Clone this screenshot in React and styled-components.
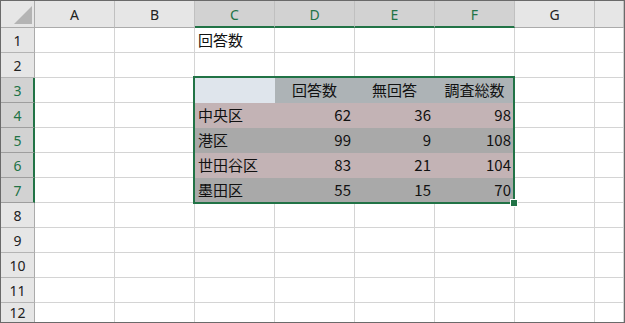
import React from "react";
import styled, { createGlobalStyle, css } from "styled-components";

const Global = createGlobalStyle`
  html, body { margin: 0; padding: 0; background: #ffffff; }
  * { box-sizing: border-box; }
`;

const GREEN = "#217346";

const Sheet = styled.div`
  width: 625px;
  height: 323px;
  border: 1px solid #6a6a6a;
  display: grid;
  grid-template-columns: 34px repeat(7, 80px) 1fr;
  grid-template-rows: 27px repeat(11, 25px) 1fr;
  background: #ffffff;
  overflow: hidden;
  font-family: "Noto Sans CJK JP", "Noto Sans", sans-serif;
`;

const placed = css`
  grid-row: ${(p) => p.$row};
  grid-column: ${(p) => p.$col};
`;

const Corner = styled.div`
  grid-row: 1;
  grid-column: 1;
  background: #e6e6e6;
  border-right: 1px solid #ababab;
  border-bottom: 1px solid #ababab;
  display: flex;
  align-items: flex-end;
  justify-content: flex-end;
  padding: 0 2px 3px 0;
`;

const ColHead = styled.div`
  ${placed};
  background: ${(p) => (p.$sel ? "#d2d2d2" : "#e6e6e6")};
  color: ${(p) => (p.$sel ? GREEN : "#222222")};
  border-right: 1px solid #c0c0c0;
  border-bottom: ${(p) => (p.$sel ? `2px solid ${GREEN}` : "1px solid #ababab")};
  display: flex;
  align-items: center;
  justify-content: center;
  font-family: "Noto Sans", "Open Sans", sans-serif;
  font-size: 14px;
  padding-top: ${(p) => (p.$sel ? "1px" : "0")};
`;

const RowHead = styled.div`
  ${placed};
  background: ${(p) => (p.$sel ? "#d2d2d2" : "#e6e6e6")};
  color: ${(p) => (p.$sel ? GREEN : "#222222")};
  border-right: ${(p) => (p.$sel ? `2px solid ${GREEN}` : "1px solid #ababab")};
  border-bottom: 1px solid ${(p) => (p.$sel ? "#9e9e9e" : "#b4b4b4")};
  display: flex;
  align-items: center;
  justify-content: center;
  font-family: "Noto Sans", "Open Sans", sans-serif;
  font-size: 14px;
  padding-left: ${(p) => (p.$sel ? "1px" : "0")};
`;

const justify = { right: "flex-end", center: "center", left: "flex-start" };

const Cell = styled.div`
  ${placed};
  border-right: 1px solid #d4d4d4;
  border-bottom: 1px solid #d4d4d4;
  display: flex;
  align-items: center;
  justify-content: ${(p) => justify[p.$align || "left"]};
  padding: 0 3px 2px 3px;
  font-size: 15px;
  color: #111111;
  white-space: nowrap;
  ${(p) =>
    p.$fill &&
    css`
      background: ${p.$fill};
      border-color: ${p.$fill};
    `}
`;

const Selection = styled.div`
  grid-column: 4 / 8;
  grid-row: 4 / 9;
  margin: -2px 0 -1px -2px;
  border: 2px solid ${GREEN};
  position: relative;
  pointer-events: none;
  z-index: 1;
`;

const Handle = styled.div`
  position: absolute;
  right: -5px;
  bottom: -5px;
  width: 8px;
  height: 8px;
  background: ${GREEN};
  border: 1px solid #ffffff;
`;

const cols = ["A", "B", "C", "D", "E", "F", "G", ""];
const selCols = ["C", "D", "E", "F"];

const C3 = "#dfe5ec";
const HEAD = "#adb3b6";
const PINK = "#c3b3b5";
const GRAY = "#a9a9a9";

const data = {
  1: { C: { t: "回答数" } },
  3: {
    C: { t: "", f: C3 },
    D: { t: "回答数", f: HEAD, a: "center" },
    E: { t: "無回答", f: HEAD, a: "center" },
    F: { t: "調査総数", f: HEAD, a: "center" },
  },
};

const rowsData = [
  ["中央区", 62, 36, 98, PINK],
  ["港区", 99, 9, 108, GRAY],
  ["世田谷区", 83, 21, 104, PINK],
  ["墨田区", 55, 15, 70, GRAY],
];
rowsData.forEach(([name, a, b, c, fill], i) => {
  data[4 + i] = {
    C: { t: name, f: fill },
    D: { t: String(a), f: fill, a: "right" },
    E: { t: String(b), f: fill, a: "right" },
    F: { t: String(c), f: fill, a: "right" },
  };
});

function CornerTriangle() {
  return (
    <svg width="18" height="18" viewBox="0 0 18 18">
      <polygon points="0,18 18,18 18,0" fill="#b4b4b4" />
    </svg>
  );
}

export default function App() {
  const rows = Array.from({ length: 12 }, (_, i) => i + 1);
  return (
    <>
      <Global />
      <Sheet>
        <Corner>
          <CornerTriangle />
        </Corner>
        {cols.map((c, i) => (
          <ColHead key={"h" + i} $row={1} $col={i + 2} $sel={selCols.includes(c)}>
            {c}
          </ColHead>
        ))}
        {rows.map((r) => (
          <React.Fragment key={r}>
            <RowHead $row={r + 1} $col={1} $sel={r >= 3 && r <= 7}>
              {r}
            </RowHead>
            {cols.map((c, i) => {
              const d = (data[r] && data[r][c]) || null;
              return (
                <Cell
                  key={r + "-" + i}
                  $row={r + 1}
                  $col={i + 2}
                  $fill={d && d.f}
                  $align={d && d.a}
                >
                  {d ? d.t : ""}
                </Cell>
              );
            })}
          </React.Fragment>
        ))}
        <Selection>
          <Handle />
        </Selection>
      </Sheet>
    </>
  );
}
